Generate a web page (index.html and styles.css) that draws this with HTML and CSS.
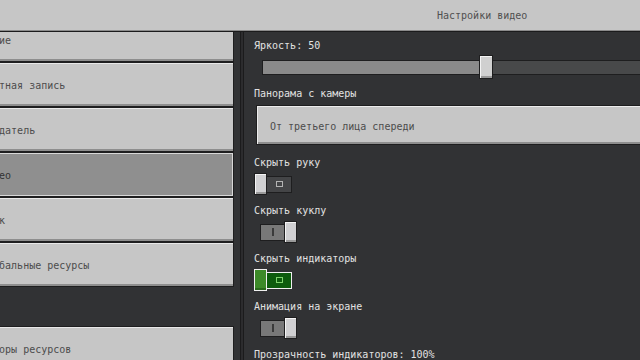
FILE: index.html
```html
<!DOCTYPE html>
<html lang="ru">
<head>
<meta charset="utf-8">
<title>Настройки видео</title>
<link rel="stylesheet" href="styles.css">
</head>
<body>
<div class="screen">
  <header class="header"><span class="title">Настройки видео</span></header>
  <div class="main">
    <nav class="left">
      <div class="list">
        <div class="btn">Общие</div>
        <div class="btn">Учетная запись</div>
        <div class="btn">Создатель</div>
        <div class="btn selected">Видео</div>
        <div class="btn">Звук</div>
        <div class="btn">Глобальные ресурсы</div>
        <div class="btn section-gap">Наборы ресурсов</div>
      </div>
    </nav>
    <div class="divider"></div>
    <section class="right">
      <div class="label">Яркость: 50</div>
      <div class="slider">
        <div class="fill"></div>
        <div class="thumb"></div>
        <div class="rest"></div>
      </div>
      <div class="label gap-9">Панорама с камеры</div>
      <div class="dropdown">От третьего лица спереди</div>

      <div class="label gap-12">Скрыть руку</div>
      <div class="toggle off"><span class="knob"></span><span class="track"><span class="ico-o"></span></span></div>

      <div class="label gap-10">Скрыть куклу</div>
      <div class="toggle on"><span class="track"><span class="ico-i"></span></span><span class="knob"></span></div>

      <div class="label gap-10">Скрыть индикаторы</div>
      <div class="toggle off focus"><span class="knob"></span><span class="track"><span class="ico-o"></span></span></div>

      <div class="label gap-10">Анимация на экране</div>
      <div class="toggle on"><span class="track"><span class="ico-i"></span></span><span class="knob"></span></div>

      <div class="label gap-10">Прозрачность индикаторов: 100%</div>
    </section>
  </div>
</div>
</body>
</html>
```
FILE: styles.css
```css
* { box-sizing: border-box; }
html, body { margin: 0; padding: 0; }
body {
  width: 640px;
  height: 360px;
  overflow: hidden;
  background: #313234;
  font-family: "DejaVu Sans Mono", "Liberation Mono", monospace;
  font-size: 10px;
}
.screen { width: 640px; height: 360px; display: flex; flex-direction: column; }
.header {
  height: 31px;
  flex: none;
  background: #c6c6c6;
  border-bottom: 1px solid #8b8b8b;
  display: flex;
  align-items: center;
  padding-left: 437px;
  color: #505050;
}
.title { white-space: nowrap; }
.main {
  flex: 1;
  display: flex;
  border-top: 1px solid #1b1b1c;
  overflow: hidden;
}
.left { width: 240px; flex: none; overflow: hidden; }
.list {
  margin: -15px 0 0 -20px;
  width: 254px;
  display: flex;
  flex-direction: column;
}
.btn {
  height: 45px;
  flex: none;
  background: #c6c6c6;
  border: 1px solid #1e1e1f;
  box-shadow: inset 0 1px 0 #e8e8e8, inset 0 -2px 0 #8e8e8e;
  display: flex;
  align-items: center;
  color: #4c4c4c;
  white-space: nowrap;
  padding-top: 1px;
}
.btn.selected {
  background: #8f8f8f;
  color: #333333;
  box-shadow: inset 0 0 0 1px #d8d8d8;
}
.section-gap { margin-top: 39px; }
.divider {
  width: 4px;
  flex: none;
  border-left: 1px solid #1b1b1c;
  border-right: 1px solid #1b1b1c;
  background: #2c2c2e;
}
.right {
  flex: 1;
  overflow: hidden;
  padding: 8px 0 0 10px;
  display: flex;
  flex-direction: column;
}
.label {
  height: 12px;
  line-height: 12px;
  color: #e2e2e2;
  white-space: nowrap;
  flex: none;
}
.gap-9 { margin-top: 9px; }
.gap-10 { margin-top: 10px; }
.gap-12 { margin-top: 12px; }
.slider {
  margin: 3px 0 0 8px;
  height: 24px;
  display: flex;
  align-items: center;
  flex: none;
}
.fill {
  width: 217px;
  height: 15px;
  background: #8a8a8a;
  border: 1px solid #1e1e1f;
  border-right: 0;
  flex: none;
}
.thumb {
  width: 14px;
  height: 24px;
  background: #d0d0d0;
  border: 1px solid #1e1e1f;
  box-shadow: inset 1px 1px 0 #f4f4f4, inset 0 -2px 0 #9a9a9a;
  flex: none;
}
.rest {
  width: 200px;
  height: 15px;
  background: #48494a;
  border: 1px solid #1e1e1f;
  border-left: 0;
  flex: none;
}
.dropdown {
  margin: 5px 0 0 2px;
  width: 400px;
  height: 40px;
  flex: none;
  background: #c6c6c6;
  border: 1px solid #1e1e1f;
  box-shadow: inset 1px 1px 0 #ececec, inset 0 -2px 0 #8e8e8e;
  display: flex;
  align-items: center;
  padding: 2px 0 0 13px;
  color: #4c4c4c;
  white-space: nowrap;
}
.toggle {
  margin-top: 4px;
  height: 22px;
  display: flex;
  align-items: center;
  flex: none;
}
.toggle.on { margin-left: 6px; }
.knob {
  width: 13px;
  height: 22px;
  flex: none;
  background: #d0d0d2;
  border: 1px solid #1e1e1f;
  box-shadow: inset 1px 1px 0 #f4f4f4, inset 0 -2px 0 #9a9a9a;
}
.toggle.on .knob { margin-left: -1px; }
.track {
  width: 25px;
  height: 17px;
  flex: none;
  border: 1px solid #1e1e1f;
  display: flex;
  align-items: center;
  justify-content: center;
}
.toggle.off .track { background: #444547; border-left: 0; }
.toggle.on .track { background: #787878; }
.ico-o {
  width: 7px;
  height: 6px;
  border: 1px solid #b4b4b4;
}
.ico-i {
  width: 2px;
  height: 8px;
  background: #3a3a3a;
}
.toggle.focus .knob {
  background: #3c8a28;
  border-color: #f0f0f0;
  box-shadow: inset 0 -2px 0 #2a6a1c;
}
.toggle.focus .track {
  background: #0d5c0d;
  border-color: #f0f0f0;
  border-left: 0;
}
.toggle.focus .ico-o { border-color: #7fd46c; }
```
